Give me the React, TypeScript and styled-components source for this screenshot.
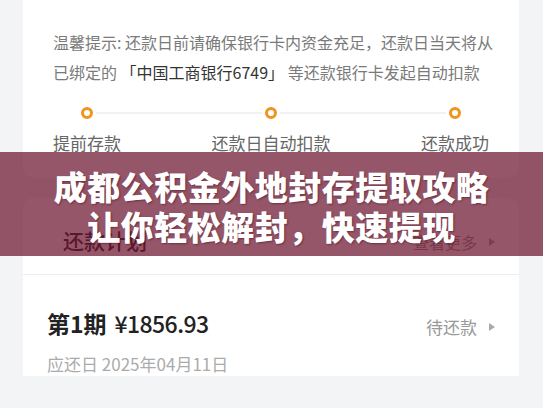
import React from "react";
import styled, { createGlobalStyle } from "styled-components";

const GlobalStyle = createGlobalStyle`
  html, body {
    margin: 0;
    padding: 0;
    background: #f3f4f6;
    font-family: "Noto Sans CJK SC", "Noto Sans", sans-serif;
  }
  * { box-sizing: border-box; }
`;

const Page = styled.div`
  position: relative;
  width: 543px;
  height: 408px;
  overflow: hidden;
  background: #f3f4f6;
  padding: 0 24px 0 23px;
`;

const Card = styled.div<{ $top?: boolean }>`
  background: #ffffff;
  border-radius: ${(p) => (p.$top ? "0 0 10px 10px" : "10px 10px 0 0")};
  margin-top: ${(p) => (p.$top ? "0" : "20px")};
`;

const NoticeBox = styled.div`
  padding: 27px 30px 23px 30px;
`;

const NoticeLine = styled.div`
  font-size: 16px;
  line-height: 30px;
  color: #7a7a7a;
  white-space: nowrap;
`;

const Bank = styled.span`
  color: #333333;
`;

const DotsRow = styled.div`
  display: flex;
  align-items: center;
  padding: 0 28px;
  margin-top: 20px;
`;

const Dot = styled.span`
  width: 12px;
  height: 12px;
  border-radius: 50%;
  border: 3px solid #f0941e;
  background: #fff;
  flex: none;
`;

const Connector = styled.span`
  flex: 1;
  height: 2px;
  background: #f1f1f1;
  margin: 0 3px;
`;

const LabelsRow = styled.div`
  display: flex;
  justify-content: space-between;
  margin-top: 12px;
`;

const StepLabel = styled.span`
  font-size: 17px;
  line-height: 24px;
  color: #666666;
`;

const PlanHeader = styled.div`
  display: flex;
  justify-content: space-between;
  align-items: baseline;
  padding: 28px 24px 20px 40px;
  border-bottom: 1px solid #eeeeee;
`;

const PlanTitle = styled.span`
  font-size: 21px;
  line-height: 28px;
  font-weight: 500;
  color: #333333;
`;

const MoreLink = styled.span`
  display: flex;
  align-items: center;
  font-size: 16px;
  color: #999999;
`;

const Caret = styled.span`
  display: inline-block;
  width: 0;
  height: 0;
  border-top: 4px solid transparent;
  border-bottom: 4px solid transparent;
  border-left: 6px solid #aaaaaa;
  margin-left: 12px;
`;

const Installment = styled.div`
  display: flex;
  justify-content: space-between;
  align-items: flex-start;
  padding: 32px 24px 0 24px;
`;

const InstallmentInfo = styled.div`
  display: flex;
  flex-direction: column;
`;

const Amount = styled.div`
  font-size: 23px;
  line-height: 32px;
  color: #222222;
  font-weight: 500;
`;

const Period = styled.span`
  font-weight: 700;
  margin-right: 8px;
`;

const Money = styled.span`
  letter-spacing: -0.6px;
`;

const DueDate = styled.div`
  margin-top: 13px;
  font-size: 17px;
  line-height: 24px;
  color: #ababab;
`;

const Status = styled.span`
  display: flex;
  align-items: center;
  margin-top: 8px;
  font-size: 17px;
  line-height: 24px;
  color: #999999;
`;

const Banner = styled.div`
  position: absolute;
  left: 0;
  right: 0;
  top: 152px;
  height: 104px;
  background: rgba(106, 14, 42, 0.7);
  display: flex;
  flex-direction: column;
  align-items: center;
  justify-content: center;
  padding-top: 4px;
`;

const BannerLine = styled.div`
  font-size: 33px;
  line-height: 40px;
  font-weight: 900;
  color: #ffffff;
  letter-spacing: 0.5px;
  white-space: nowrap;
  text-shadow: 1px 1px 2px rgba(60, 0, 20, 0.45);
`;

export default function App() {
  return (
    <>
      <GlobalStyle />
      <Page>
        <Card $top>
          <NoticeBox>
            <NoticeLine>温馨提示: 还款日前请确保银行卡内资金充足，还款日当天将从</NoticeLine>
            <NoticeLine>
              已绑定的 <Bank>「中国工商银行6749」</Bank> 等还款银行卡发起自动扣款
            </NoticeLine>
            <DotsRow>
              <Dot />
              <Connector />
              <Dot />
              <Connector />
              <Dot />
            </DotsRow>
            <LabelsRow>
              <StepLabel>提前存款</StepLabel>
              <StepLabel>还款日自动扣款</StepLabel>
              <StepLabel>还款成功</StepLabel>
            </LabelsRow>
          </NoticeBox>
        </Card>
        <Card>
          <PlanHeader>
            <PlanTitle>还款计划</PlanTitle>
            <MoreLink>
              查看更多
              <Caret />
            </MoreLink>
          </PlanHeader>
          <Installment>
            <InstallmentInfo>
              <Amount>
                <Period>第1期</Period>
                <Money>¥1856.93</Money>
              </Amount>
              <DueDate>应还日 2025年04月11日</DueDate>
            </InstallmentInfo>
            <Status>
              待还款
              <Caret />
            </Status>
          </Installment>
        </Card>
        <Banner>
          <BannerLine>成都公积金外地封存提取攻略</BannerLine>
          <BannerLine>让你轻松解封，快速提现</BannerLine>
        </Banner>
      </Page>
    </>
  );
}
